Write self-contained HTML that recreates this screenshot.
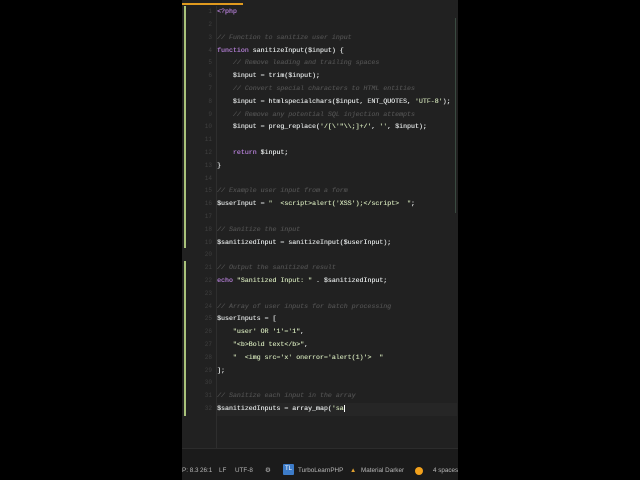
<!DOCTYPE html>
<html><head><style>
*{margin:0;padding:0;box-sizing:border-box}
body{width:640px;height:480px;background:#000;position:relative;overflow:hidden;font-family:"Liberation Mono",monospace}
#ed{position:absolute;left:182px;top:0;width:276px;height:480px;background:#212121}
.ln{position:absolute;left:0;width:30px;text-align:right;font-size:6px;color:#3f3f3f;line-height:12.8px}
.c{position:absolute;left:35px;font-size:6.6px;color:#dcdfdf;white-space:pre;line-height:12.8px;text-shadow:0.2px 0 0 currentColor}
.cm{color:#4e4e4e;font-style:italic}
.k{color:#b47fd6}
.s{color:#c8d8b0}
#sb{position:absolute;left:0;top:448px;width:276px;height:32px;background:#1b1b1b;border-top:1px solid #2c2c2c;font-family:"Liberation Sans",sans-serif;font-size:6.3px;color:#b8b8b8}
#sb span{position:absolute;top:18px;white-space:nowrap}
</style></head><body>
<div id="ed">
<div style="position:absolute;left:0;top:3px;width:61px;height:2px;background:#e09a1e"></div>
<div style="position:absolute;left:2px;top:6px;width:2px;height:242px;background:#a9c27a"></div>
<div style="position:absolute;left:2px;top:261px;width:2px;height:155px;background:#a9c27a"></div>
<div style="position:absolute;left:34px;top:6px;width:1px;height:442px;background:#2e2e2e"></div>
<div style="position:absolute;left:273px;top:18px;width:1px;height:195px;background:#3a4a40"></div>
<div style="position:absolute;left:35px;top:403px;width:240px;height:13px;background:#262626"></div>
<div id="lines"></div>
<div id="sb">
<span style="left:0">P: 8.3</span><span style="left:18px">26:1</span><span style="left:37px">LF</span><span style="left:53px">UTF-8</span><span style="left:83px">⚙</span>
<span style="left:101px;top:15px;width:11px;height:11px;background:#3d7cc9;color:#fff;font-size:6px;text-align:center;line-height:11px;border-radius:1px">TL</span>
<span style="left:116px">TurboLearnPHP</span>
<span style="left:168px;color:#e0a030">▲</span><span style="left:179px">Material Darker</span>
<span style="left:233px;top:18px;width:8px;height:8px;border-radius:50%;background:#f2a11c"></span>
<span style="left:251px">4 spaces</span>
</div>
</div>
<script>
var L=[
'<span class="k">&lt;?php</span>','',
'<span class="cm">// Function to sanitize user input</span>',
'<span class="k">function</span> sanitizeInput($input) {',
'    <span class="cm">// Remove leading and trailing spaces</span>',
'    $input = trim($input);',
'    <span class="cm">// Convert special characters to HTML entities</span>',
'    $input = htmlspecialchars($input, ENT_QUOTES, <span class="s">\'UTF-8\'</span>);',
'    <span class="cm">// Remove any potential SQL injection attempts</span>',
'    $input = preg_replace(<span class="s">\'/[\\\'"\\\\;]+/\'</span>, <span class="s">\'\'</span>, $input);',
'','    <span class="k">return</span> $input;','}','',
'<span class="cm">// Example user input from a form</span>',
'$userInput = <span class="s">"  &lt;script&gt;alert(\'XSS\');&lt;/script&gt;  "</span>;','',
'<span class="cm">// Sanitize the input</span>',
'$sanitizedInput = sanitizeInput($userInput);','',
'<span class="cm">// Output the sanitized result</span>',
'<span class="k">echo</span> <span class="s">"Sanitized Input: "</span> . $sanitizedInput;','',
'<span class="cm">// Array of user inputs for batch processing</span>',
'$userInputs = [',
'    <span class="s">"user\' OR \'1\'=\'1"</span>,',
'    <span class="s">"&lt;b&gt;Bold text&lt;/b&gt;"</span>,',
'    <span class="s">"  &lt;img src=\'x\' onerror=\'alert(1)\'&gt;  "</span>',
'];','',
'<span class="cm">// Sanitize each input in the array</span>',
'$sanitizedInputs = array_map(<span class="s">\'sa</span><span style="border-left:1px solid #fff"></span>'
];
var h='';
for(var i=0;i<L.length;i++){var t=6.2+12.8*i;
h+='<div class="ln" style="top:'+t+'px">'+(i+1)+'</div><div class="c" style="top:'+t+'px">'+L[i]+'</div>';}
document.getElementById('lines').innerHTML=h;
</script>
</body></html>
